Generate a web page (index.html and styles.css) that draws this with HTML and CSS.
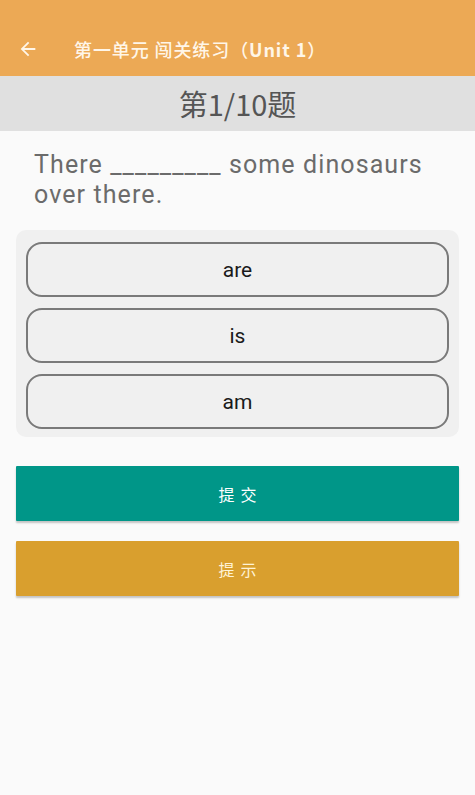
FILE: index.html
```html
<!DOCTYPE html>
<html lang="zh">
<head>
<meta charset="utf-8">
<title>闯关练习</title>
<link rel="stylesheet" href="styles.css">
</head>
<body>
<header class="appbar">
  <svg class="back" width="22" height="22" viewBox="0 0 24 24"><path d="M20 11H7.83l5.59-5.59L12 4l-8 8 8 8 1.41-1.41L7.83 13H20v-2z" fill="currentColor"/></svg>
  <h1 class="title">第一单元 闯关练习（<span class="unit">Unit 1</span>）</h1>
</header>
<div class="progress">第1/10题</div>
<main class="content">
  <p class="question">There _________ some dinosaurs over there.</p>
  <div class="options">
    <button class="option">are</button>
    <button class="option">is</button>
    <button class="option">am</button>
  </div>
  <button class="action submit">提交</button>
  <button class="action hint">提示</button>
</main>
</body>
</html>
```

FILE: styles.css
```css
* { box-sizing: border-box; }
html, body { margin: 0; padding: 0; }
body {
  background: #fafafa;
  font-family: Roboto, "Noto Sans", "Noto Sans CJK SC", sans-serif;
  width: 475px;
  min-height: 795px;
}
.appbar {
  height: 76px;
  background: #eca955;
  display: flex;
  align-items: center;
  padding: 22px 0 0 17px;
  color: #fff6e8;
}
.back { flex: none; color: #fff6e8; }
.title {
  margin: 0 0 0 35px;
  font-size: 18px;
  font-weight: 500;
  font-family: "Noto Sans CJK SC", "Noto Sans", sans-serif;
  color: #fff6e8;
  letter-spacing: 0.9px;
}
.unit { font-weight: 700; }
.progress {
  height: 55px;
  background: #e0e0e0;
  display: flex;
  align-items: center;
  justify-content: center;
  font-family: "Noto Sans CJK SC", sans-serif;
  font-size: 29px;
  color: #555;
  padding-bottom: 1px;
}
.content {
  padding: 0 16px;
  display: flex;
  flex-direction: column;
}
.question {
  margin: 19px 0 0 18px;
  font-size: 25px;
  line-height: 30px;
  letter-spacing: 1.1px;
  color: #6b6b6b;
}
.options {
  margin-top: 20px;
  background: #f0f0f0;
  border-radius: 10px;
  padding: 12px 10px 8px;
  display: flex;
  flex-direction: column;
  gap: 11px;
}
.option {
  height: 55px;
  border: 2px solid #7a7a7a;
  border-radius: 16px;
  background: #f0f0f0;
  font-family: Roboto, sans-serif;
  font-size: 21px;
  color: #1a1a1a;
  padding: 0;
}
.action {
  height: 55px;
  border: none;
  border-radius: 1px;
  font-family: "Noto Sans CJK SC", sans-serif;
  font-size: 16px;
  letter-spacing: 6px;
  text-indent: 6px;
  box-shadow: 0 2px 2px rgba(0,0,0,0.22);
}
.submit {
  margin-top: 29px;
  background: #009688;
  color: #ffffff;
}
.hint {
  margin-top: 20px;
  background: #d99f2e;
  color: #fff3d6;
}
```
